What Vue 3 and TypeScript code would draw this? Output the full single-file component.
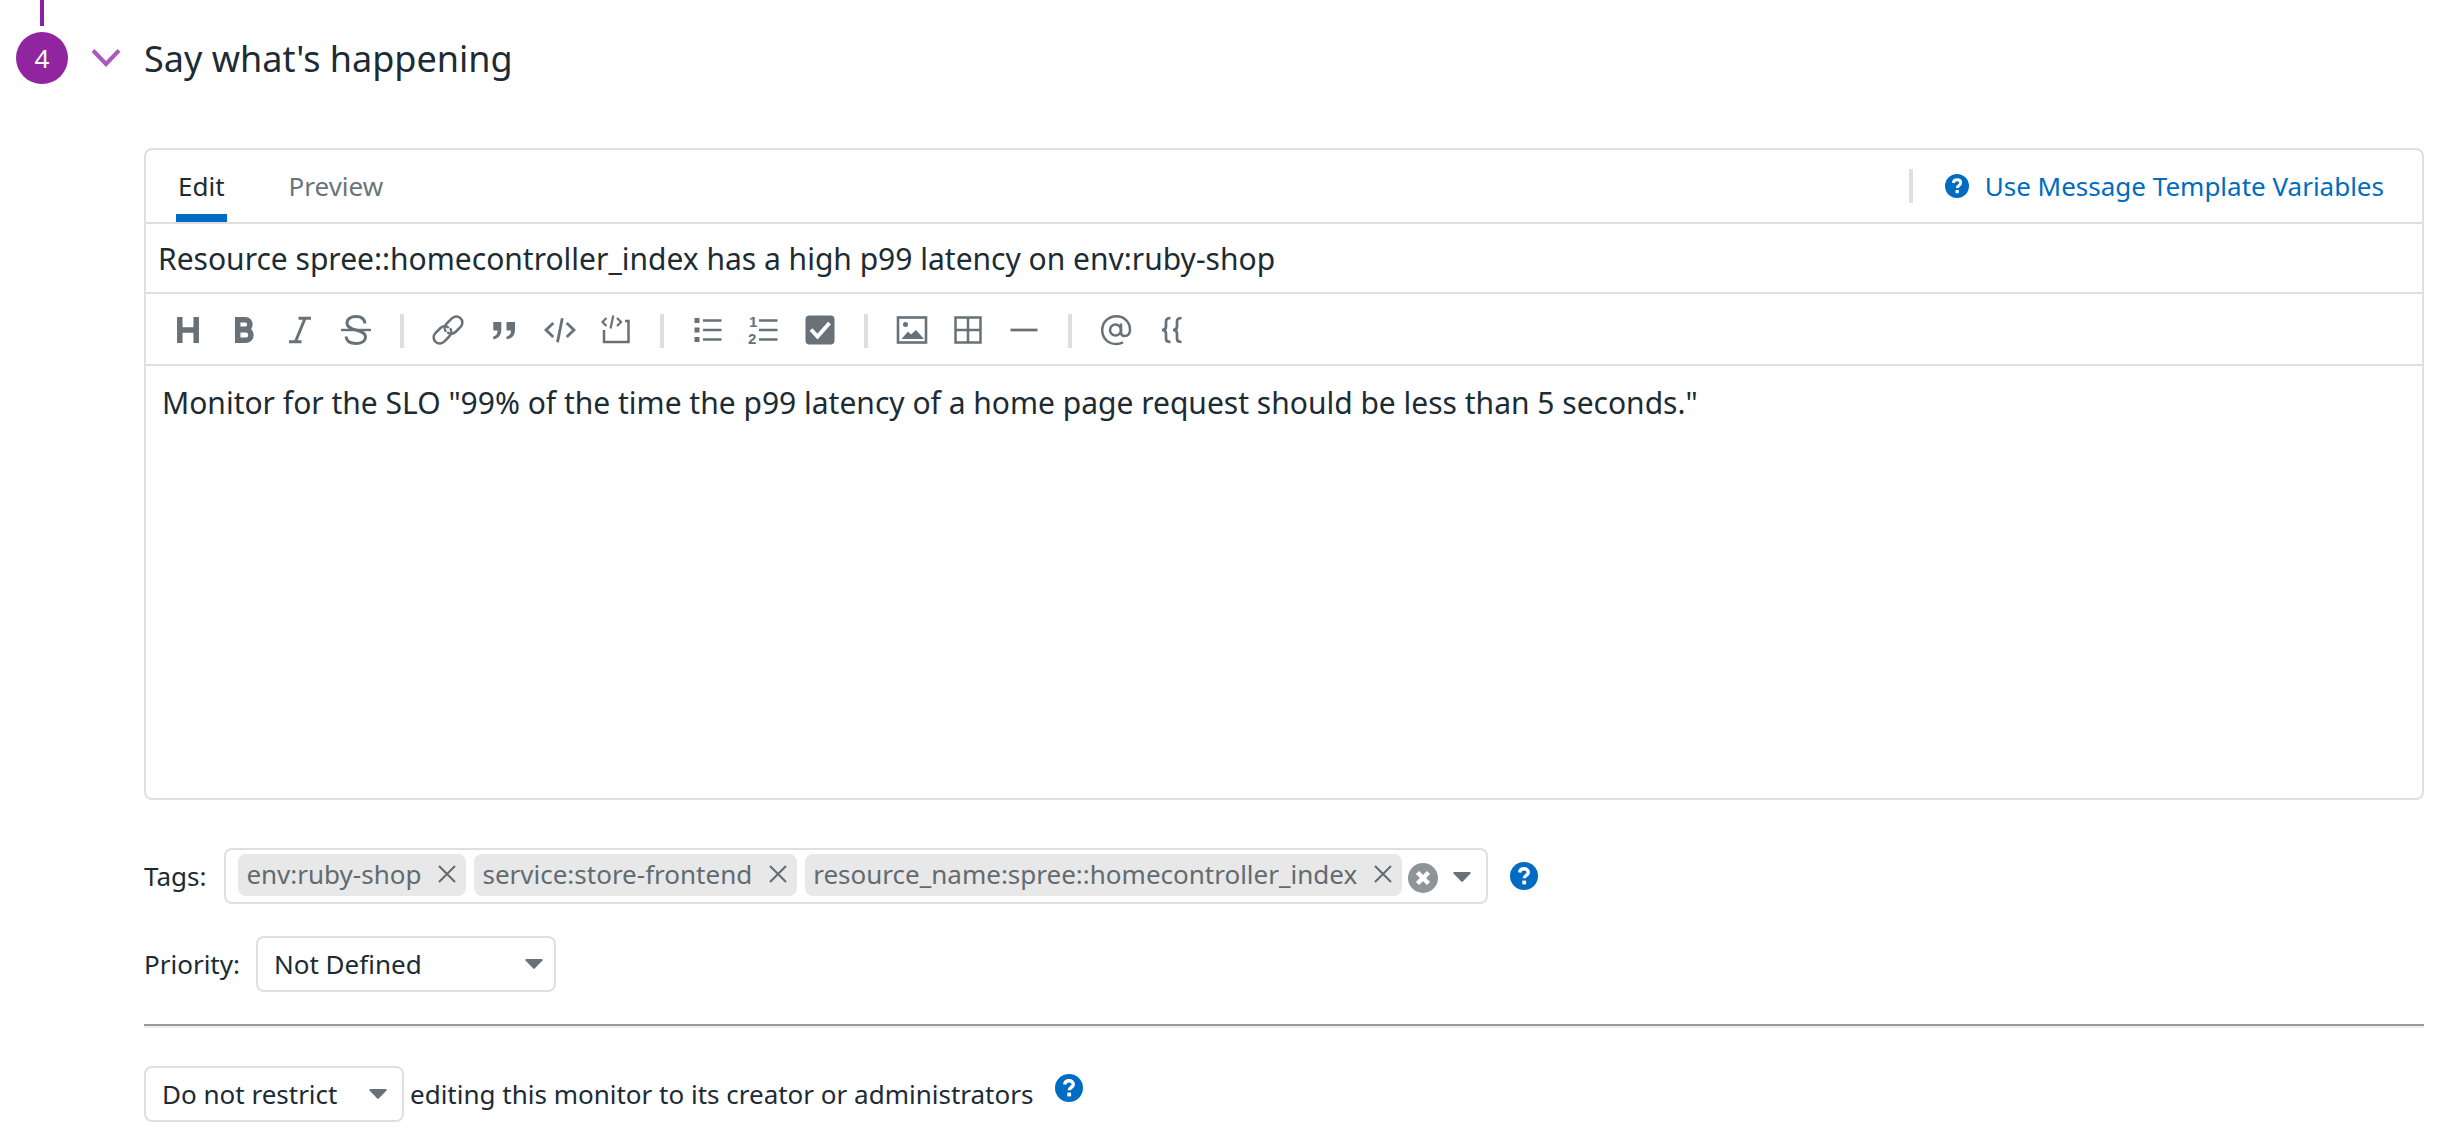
<script setup lang="ts">
import { ref } from 'vue'

interface Tool {
  id: string
  label: string
}

const toolGroups: Tool[][] = [
  [
    { id: 'heading', label: 'Heading' },
    { id: 'bold', label: 'Bold' },
    { id: 'italic', label: 'Italic' },
    { id: 'strike', label: 'Strikethrough' },
  ],
  [
    { id: 'link', label: 'Link' },
    { id: 'quote', label: 'Quote' },
    { id: 'code', label: 'Inline code' },
    { id: 'codeblock', label: 'Code block' },
  ],
  [
    { id: 'bullets', label: 'Bulleted list' },
    { id: 'numbers', label: 'Numbered list' },
    { id: 'task', label: 'Task list' },
  ],
  [
    { id: 'image', label: 'Image' },
    { id: 'table', label: 'Table' },
    { id: 'rule', label: 'Horizontal rule' },
  ],
  [
    { id: 'mention', label: 'Mention' },
    { id: 'variable', label: 'Template variable' },
  ],
]

const caretPath = 'M2.5 1h15q2 0 1 1.500L11 10.200q-1 1-2 0L1.500 2.500Q.5 1 2.500 1z'
const questionPath = 'M9.600 10.600C10 8 11.600 6.800 14 6.800c2.500 0 4.300 1.400 4.300 3.500 0 3.200-4 3-4 6'

const activeTab = ref<'Edit' | 'Preview'>('Edit')
const tabs = ['Edit', 'Preview'] as const

const title = ref('Resource spree::homecontroller_index has a high p99 latency on env:ruby-shop')
const message = ref(
  'Monitor for the SLO "99% of the time the p99 latency of a home page request should be less than 5 seconds."',
)
const tags = ref(['env:ruby-shop', 'service:store-frontend', 'resource_name:spree::homecontroller_index'])
const priority = ref('Not Defined')
const restriction = ref('Do not restrict')

function removeTag(tag: string) {
  tags.value = tags.value.filter((t) => t !== tag)
}
</script>

<template>
  <main class="step">
    <header class="step-header">
      <div class="rail">
        <span class="rail-line"></span>
        <span class="rail-number">4</span>
      </div>
      <button class="toggle" type="button" aria-label="Collapse section">
        <svg width="30" height="20" viewBox="0 0 30 20" fill="none" stroke="currentColor" stroke-width="4">
          <path d="M2 2.500 15 16 28 2.500" />
        </svg>
      </button>
      <h2>Say what's happening</h2>
    </header>

    <div class="content">
      <section class="editor">
        <div class="editor-top">
          <div class="tabs" role="tablist">
            <button
              v-for="tab in tabs"
              :key="tab"
              class="tab"
              :class="{ active: tab === activeTab }"
              type="button"
              role="tab"
              :aria-selected="tab === activeTab"
              @click="activeTab = tab"
            >
              {{ tab }}
            </button>
          </div>
          <span class="divider"></span>
          <a class="help-link" href="#">
            <svg class="help small" viewBox="0 0 28 28">
              <circle cx="14" cy="14" r="14" />
              <path class="mark" :d="questionPath" />
              <rect class="dot" x="12.300" y="18.600" width="3.800" height="3.800" />
            </svg>
            <span>Use Message Template Variables</span>
          </a>
        </div>

        <input v-model="title" class="title-input" type="text" aria-label="Monitor title" />

        <div class="toolbar" role="toolbar" aria-label="Formatting">
          <template v-for="(group, index) in toolGroups" :key="index">
            <span v-if="index > 0" class="divider"></span>
            <div class="tool-group">
              <button v-for="tool in group" :key="tool.id" class="tool" type="button" :aria-label="tool.label">
                <svg width="32" height="32" viewBox="0 0 32 32" fill="none" stroke="currentColor" stroke-width="2">
                  <path v-if="tool.id === 'heading'" stroke-width="5.500" d="M7.800 3v26M24.200 3v26M8 16h16" />
                  <path
                    v-else-if="tool.id === 'bold'"
                    stroke-width="5.500"
                    d="M10 5.700h7.500a4.200 4.600 0 0 1 0 9.600H10M10 15.800h8.300a4.600 5.200 0 0 1 0 10.500H10M9.700 3v26"
                  />
                  <path v-else-if="tool.id === 'italic'" stroke-width="3" d="M14.500 4.300H27M5 27.700h12.500M21 4.500l-9.500 23" />
                  <g v-else-if="tool.id === 'strike'" stroke-width="2.900">
                    <path d="M1 16h30" stroke-width="2.400" />
                    <path d="M25 9.500C24.500 5 21 2.500 16 2.500c-5.200 0-9 2.400-9 6.500 0 4 3.500 5.500 9 7s9.500 3 9.500 7-4 6.500-9.500 6.500-9.500-2.500-10-7" />
                  </g>
                  <g v-else-if="tool.id === 'link'" stroke-width="2.500">
                    <path d="M12.500 18.500a6 6 0 0 1 .8-8.200l5-5a6 6 0 0 1 9 8.200l-5.300 5.300a6 6 0 0 1-8.300.2" transform="translate(1.500 -.800)" />
                    <path d="M19.500 13.500a6 6 0 0 1-.8 8.200l-5 5a6 6 0 0 1-9-8.200l5.300-5.300a6 6 0 0 1 8.300-.2" transform="translate(-1.500 .800)" />
                  </g>
                  <g v-else-if="tool.id === 'quote'" fill="currentColor" stroke="none">
                    <path d="M5.300 8h8v7.500c0 6-3 9.200-8 9.800v-2.800c2.800-.5 4.200-2.500 4.200-6H5.300z" />
                    <path d="M18.500 8h8.500v7.500c0 6-3 9.200-8.500 9.800v-2.800c3-.5 4.500-2.500 4.500-6h-4.500z" />
                  </g>
                  <g v-else-if="tool.id === 'code'" stroke-width="2.800">
                    <path d="M9.300 9 2 16l7.300 7M22.700 9l7.300 7-7.300 7" />
                    <path d="m18.300 4.200-4.800 24" />
                  </g>
                  <g v-else-if="tool.id === 'codeblock'">
                    <path d="M4 16v12h24.500V7H25" stroke-width="2.500" />
                    <path d="M6.500 4 2.500 8l4 4M17 4l4 4-4 4M13.300 1.500l-2.800 13" stroke-width="2.200" />
                  </g>
                  <g v-else-if="tool.id === 'bullets'">
                    <path d="M11 6.500h18.500M11 16h18.500M11 25.500h18.500" stroke-width="2.700" />
                    <path d="M2.500 6.500h5M2.500 16h5M2.500 25.500h5" stroke-width="5" />
                  </g>
                  <g v-else-if="tool.id === 'numbers'">
                    <path d="M11 6.500h18.500M11 16h18.500M11 25.500h18.500" stroke-width="2.700" />
                    <text class="digit" x="1" y="12.500">1</text>
                    <text class="digit" x="0" y="29.500">2</text>
                  </g>
                  <g v-else-if="tool.id === 'task'">
                    <rect x="1.500" y="1.500" width="29" height="29" rx="4" fill="currentColor" stroke="none" />
                    <path d="m7 15.500 6.500 7L25.500 9" stroke="#fff" stroke-width="4" />
                  </g>
                  <g v-else-if="tool.id === 'image'">
                    <rect x="2" y="3.500" width="28" height="25" stroke-width="2.600" />
                    <circle cx="9.500" cy="10.500" r="2.500" fill="currentColor" stroke="none" />
                    <path d="m5.500 25 6.500-7.500 3 3 5-4.500 8 9z" fill="currentColor" stroke="none" />
                  </g>
                  <path v-else-if="tool.id === 'table'" stroke-width="2.500" d="M3.500 3.500h25v25h-25zM16 3.500v25M3.500 16h25" />
                  <path v-else-if="tool.id === 'rule'" stroke-width="2.700" d="M2.500 16h27" />
                  <g v-else-if="tool.id === 'mention'" stroke-width="2.500">
                    <circle cx="15.500" cy="16" r="5.500" />
                    <path d="M21 9.500V18c0 3 1.300 4 3.500 4 3.500 0 5.500-2.500 5.500-6.500C30 8 24 2.200 16.500 2.200 8.500 2.200 2.200 8 2.200 16S8 30 16 30c2.500 0 5-.6 7-1.800" />
                  </g>
                  <path
                    v-else-if="tool.id === 'variable'"
                    stroke-width="2.700"
                    d="M14.500 4c-3 0-4.500 1-4.500 3.500v5c0 2.300-1.300 3.500-4 3.500 2.700 0 4 1.200 4 3.500v5c0 2.500 1.500 3.500 4.500 3.500M25.500 4c-3 0-4.500 1-4.500 3.500v5c0 2.300-1.300 3.500-4 3.500 2.700 0 4 1.200 4 3.500v5c0 2.500 1.500 3.500 4.500 3.500"
                  />
                </svg>
              </button>
            </div>
          </template>
        </div>

        <textarea v-model="message" class="message" aria-label="Message" spellcheck="false"></textarea>
      </section>

      <div class="field tags-field">
        <label for="tags">Tags:</label>
        <div class="tag-box">
          <span v-for="tag in tags" :key="tag" class="chip">
            {{ tag }}
            <button class="remove" type="button" :aria-label="`Remove ${tag}`" @click="removeTag(tag)">
              <svg width="18" height="18" viewBox="0 0 18 18" stroke="currentColor" stroke-width="2">
                <path d="m1 1 16 16M17 1 1 17" />
              </svg>
            </button>
          </span>
          <button class="clear" type="button" aria-label="Clear tags" @click="tags = []">
            <svg width="30" height="30" viewBox="0 0 30 30">
              <circle cx="15" cy="15" r="15" fill="#8d9599" />
              <path d="m9.500 9.500 11 11m0-11-11 11" stroke="#fff" stroke-width="4.500" />
            </svg>
          </button>
          <button id="tags" class="open" type="button" aria-haspopup="listbox">
            <svg width="20" height="12" viewBox="0 0 20 12"><path :d="caretPath" /></svg>
          </button>
        </div>
        <button class="help-button" type="button" aria-label="About tags">
          <svg class="help" viewBox="0 0 28 28">
            <circle cx="14" cy="14" r="14" />
            <path class="mark" :d="questionPath" />
            <rect class="dot" x="12.300" y="18.600" width="3.800" height="3.800" />
          </svg>
        </button>
      </div>

      <div class="field priority-field">
        <label for="priority">Priority:</label>
        <div class="select wide">
          <select id="priority" v-model="priority">
            <option>Not Defined</option>
            <option>P1 (Critical)</option>
            <option>P2 (High)</option>
          </select>
          <svg width="20" height="12" viewBox="0 0 20 12"><path :d="caretPath" /></svg>
        </div>
      </div>

      <hr />

      <div class="field restrict-field">
        <div class="select">
          <select id="restriction" v-model="restriction">
            <option>Do not restrict</option>
            <option>Restrict</option>
          </select>
          <svg width="20" height="12" viewBox="0 0 20 12"><path :d="caretPath" /></svg>
        </div>
        <label for="restriction">editing this monitor to its creator or administrators</label>
        <button class="help-button raised" type="button" aria-label="About restrictions">
          <svg class="help" viewBox="0 0 28 28">
            <circle cx="14" cy="14" r="14" />
            <path class="mark" :d="questionPath" />
            <rect class="dot" x="12.300" y="18.600" width="3.800" height="3.800" />
          </svg>
        </button>
      </div>
    </div>
  </main>
</template>

<style>
body {
  margin: 0;
  background: #fff;
}
</style>

<style scoped>
.step {
  color: #1c2b34;
  font-family: 'Noto Sans', sans-serif;
  font-size: 26px;
  line-height: 36px;
  padding-bottom: 8px;
}

.step *,
.step *::before {
  box-sizing: border-box;
}

button {
  display: flex;
  align-items: center;
  justify-content: center;
  padding: 0;
  border: 0;
  background: none;
  color: inherit;
  font: inherit;
  cursor: pointer;
}

svg {
  display: block;
  flex: none;
}

.step-header {
  display: flex;
  align-items: flex-end;
  padding-left: 16px;
}

.rail {
  display: flex;
  flex-direction: column;
  align-items: center;
  gap: 6px;
  width: 52px;
}

.rail-line {
  width: 4px;
  height: 26px;
  background: #8a1fa3;
}

.rail-number {
  width: 52px;
  height: 52px;
  border-radius: 50%;
  background: #9125a0;
  color: #fff;
  line-height: 52px;
  text-align: center;
}

.toggle {
  width: 30px;
  height: 52px;
  margin: 0 23px;
  color: #ac58bc;
}

h2 {
  margin: 0;
  font-size: 36px;
  font-weight: 400;
  line-height: 50px;
}

.content {
  margin: 64px 20px 0 144px;
}

.editor {
  border: 2px solid #dfdfe0;
  border-radius: 8px;
}

.editor-top {
  display: flex;
  align-items: center;
  height: 74px;
  padding: 0 38px 0 30px;
  border-bottom: 2px solid #dfdfe0;
}

.tabs {
  display: flex;
  gap: 60px;
  align-self: stretch;
  margin-right: auto;
}

.tab {
  position: relative;
  padding: 0 2px;
  color: #69747a;
}

.tab.active {
  color: #1c2b34;
}

.tab.active::before {
  content: '';
  position: absolute;
  right: 0;
  bottom: 0;
  left: 0;
  height: 8px;
  background: #006bc2;
}

.divider {
  width: 4px;
  height: 34px;
  background: #dfdfe0;
}

.help-link {
  display: flex;
  align-items: center;
  gap: 16px;
  margin-left: 32px;
  color: #006bc2;
  text-decoration: none;
}

.help {
  width: 28px;
  height: 28px;
  fill: #006bc2;
}

.help.small {
  width: 24px;
  height: 24px;
}

.mark {
  fill: none;
  stroke: #fff;
  stroke-width: 3.4;
}

.dot {
  fill: #fff;
}

.title-input,
.message {
  display: block;
  width: 100%;
  border: 0;
  outline: 0;
  background: transparent;
  color: inherit;
  font-family: inherit;
  font-size: 30px;
  line-height: 40px;
}

.title-input {
  height: 70px;
  padding: 0 12px;
  border-bottom: 2px solid #dfdfe0;
}

.toolbar {
  display: flex;
  gap: 28px;
  height: 72px;
  padding: 20px 26px 0;
  border-bottom: 2px solid #dfdfe0;
  color: #677177;
}

.tool-group {
  display: flex;
  gap: 24px;
}

.tool {
  width: 32px;
  height: 32px;
}

.digit {
  fill: currentColor;
  stroke: none;
  font: bold 15px 'Liberation Sans', sans-serif;
}

.message {
  height: 432px;
  padding: 17px 16px;
  resize: none;
}

.field {
  display: flex;
  align-items: center;
}

.tags-field {
  margin-top: 48px;
}

.tag-box {
  display: flex;
  gap: 8px;
  height: 56px;
  margin-left: 18px;
  padding: 4px 14px 0 12px;
  border: 2px solid #dfdfe0;
  border-radius: 8px;
}

.chip {
  display: flex;
  align-items: center;
  gap: 17px;
  height: 42px;
  padding: 0 10px 2px 8px;
  border-radius: 8px;
  background: #e8e8e8;
  color: #626b70;
}

.clear {
  width: 30px;
  height: 48px;
  margin-left: -2px;
}

.open {
  width: 20px;
  height: 46px;
  margin-left: 6px;
  fill: #677177;
}

.help-button {
  margin-left: 22px;
}

.priority-field {
  margin-top: 32px;
}

.select {
  display: grid;
  align-items: center;
}

.select > * {
  grid-area: 1 / 1;
}

.select select {
  height: 56px;
  width: 260px;
  padding: 0 40px 0 16px;
  border: 2px solid #dfdfe0;
  border-radius: 8px;
  background: #fff;
  color: inherit;
  font: inherit;
  appearance: none;
}

.select.wide {
  margin-left: 16px;
}

.select.wide select {
  width: 300px;
}

.select svg {
  justify-self: end;
  margin-right: 16px;
  fill: #677177;
  pointer-events: none;
}

.select.wide svg {
  margin-right: 12px;
}

hr {
  height: 4px;
  margin: 32px 0 38px;
  border: 0;
  border-top: 2px solid #9a9a9a;
  border-bottom: 2px solid #eee;
}

.restrict-field {
  gap: 6px;
}

.help-button.raised {
  align-self: flex-start;
  margin: 8px 0 0 16px;
}
</style>
